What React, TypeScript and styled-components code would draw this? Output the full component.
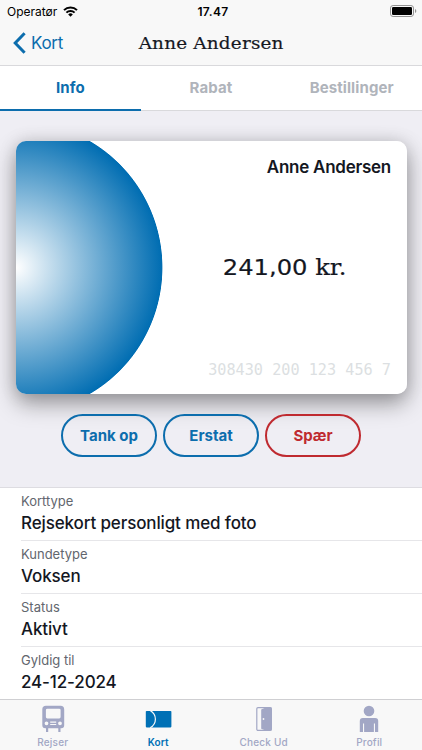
import React from "react";
import styled, { createGlobalStyle } from "styled-components";

const BLUE = "#0c6dad";
const RED = "#bf2a30";
const INK = "#14171f";
const MUTED = "#a2a7c5";

const Global = createGlobalStyle`
  * { box-sizing: border-box; }
  html, body { margin: 0; background: #fff; }
  body { font-family: Inter, "Liberation Sans", sans-serif; color: ${INK}; overflow: hidden; }
  button { font-family: inherit; margin: 0; padding: 0; background: none; border: 0; }
`;

const Screen = styled.div`
  width: 422px;
  height: 750px;
  display: flex;
  flex-direction: column;
  background: #fff;
  overflow: hidden;
`;

const Header = styled.header`
  height: 66px;
  flex: none;
  background: #f8f8f8;
  border-bottom: 1px solid #d9d9dc;
`;

const StatusBar = styled.div`
  height: 22px;
  display: grid;
  grid-template-columns: 1fr auto 1fr;
  align-items: center;
  padding: 0 5px 0 7px;
  color: #000;
`;

const Carrier = styled.div`
  display: flex;
  align-items: center;
  gap: 6px;
  font-size: 12px;
`;

const Clock = styled.div`
  padding-left: 2px;
  font-size: 12px;
  font-weight: 600;
  letter-spacing: 0.4px;
`;

const Battery = styled.svg`
  justify-self: end;
`;

const NavBar = styled.div`
  height: 42px;
  display: grid;
  grid-template-columns: 1fr auto 1fr;
  align-items: center;
`;

const Back = styled.button`
  display: flex;
  align-items: center;
  gap: 5px;
  padding-left: 13px;
  color: ${BLUE};
  font-size: 17px;
  line-height: 22px;
  letter-spacing: -0.3px;
`;

const Title = styled.h1`
  margin: 0;
  font: 400 17px/22px "DejaVu Serif", serif;
  letter-spacing: 0.2px;
  transform: scaleX(1.08);
  -webkit-text-stroke: 0.2px ${INK};
`;

const Tabs = styled.nav`
  height: 45px;
  flex: none;
  display: grid;
  grid-template-columns: repeat(3, 1fr);
  border-bottom: 1px solid #d9d9dc;
`;

const Tab = styled.button<{ $active?: boolean }>`
  height: 45px;
  border-bottom: 2px solid ${(p) => (p.$active ? BLUE : "transparent")};
  color: ${(p) => (p.$active ? BLUE : "#b0b4bb")};
  font-size: 15px;
  font-weight: 700;
  letter-spacing: 0.1px;
`;

const Hero = styled.section`
  height: 377px;
  flex: none;
  padding: 30px 15.5px 0;
  background: #efeef4;
  border-bottom: 1px solid #dddce1;
`;

const Card = styled.div`
  height: 253px;
  border-radius: 10px;
  padding: 15px 15.5px 14px;
  display: flex;
  flex-direction: column;
  justify-content: space-between;
  align-items: flex-end;
  background: radial-gradient(circle at 0 50%, #fff 0, #006db2 146px, #fff 146.8px);
  box-shadow: 0 10px 22px rgba(0, 0, 0, 0.35), 0 0 18px rgba(0, 0, 0, 0.13);
`;

const Owner = styled.div`
  font-size: 17px;
  line-height: 22px;
  font-weight: 600;
  letter-spacing: -0.25px;
`;

const Balance = styled.div`
  margin: -3px 45px 0 0;
  font: 400 22px/28px "DejaVu Sans", sans-serif;
  transform: scaleX(1.1);
  transform-origin: right;
  -webkit-text-stroke: 0.2px ${INK};
`;

const Currency = styled.span`
  font-family: "DejaVu Serif", serif;
`;

const CardNumber = styled.div`
  font: 400 15.2px/20px "DejaVu Sans Mono", monospace;
  color: #dcdfe2;
`;

const Actions = styled.div`
  margin-top: 20px;
  display: flex;
  justify-content: center;
  gap: 6px;
`;

const Pill = styled.button<{ $danger?: boolean }>`
  width: 96px;
  height: 43px;
  border-radius: 22px;
  border: 2px solid ${(p) => (p.$danger ? RED : BLUE)};
  color: ${(p) => (p.$danger ? RED : BLUE)};
  font-size: 15px;
  font-weight: 700;
`;

const Details = styled.dl`
  flex: 1;
  min-height: 0;
  margin: 0;
  padding-left: 21px;
  overflow: hidden;
`;

const Detail = styled.div`
  height: 53px;
  padding-top: 4px;
  border-bottom: 1px solid #e6e6e9;
`;

const Label = styled.dt`
  font-size: 13px;
  line-height: 19px;
  color: #62666e;
`;

const Value = styled.dd`
  margin: 0;
  font-size: 17px;
  line-height: 24px;
  font-weight: 500;
  letter-spacing: -0.13px;
`;

const TabBar = styled.footer`
  height: 51px;
  flex: none;
  display: grid;
  grid-template-columns: repeat(4, 1fr);
  background: #f8f8f8;
  border-top: 1px solid #cfcfd2;
`;

const TabItem = styled.button<{ $active?: boolean }>`
  display: flex;
  flex-direction: column;
  align-items: center;
  padding-top: 5px;
  color: ${(p) => (p.$active ? "#0070b5" : MUTED)};
  font-size: 10px;
  line-height: 14px;
  font-weight: ${(p) => (p.$active ? 600 : 500)};
  letter-spacing: 0.2px;
`;

const Glyph = styled.svg`
  display: block;
  width: 28px;
  height: 28px;
  margin-bottom: 2px;
`;

const WifiIcon = () => (
  <svg width="15" height="11" viewBox="0 0 15 11" fill="none" stroke="#000" strokeWidth="2">
    <path d="M1 4.1a9.2 9.2 0 0 1 13 0" />
    <path d="M3.4 6.6a5.8 5.8 0 0 1 8.2 0" />
    <path d="M7.5 10.7 5.2 8.4a3.3 3.3 0 0 1 4.6 0z" fill="#000" stroke="none" />
  </svg>
);

const BatteryIcon = () => (
  <Battery width="27" height="12" viewBox="0 0 27 12">
    <rect x="0.5" y="0.5" width="23" height="11" rx="2.6" fill="none" stroke="#929292" />
    <rect x="2" y="2" width="20" height="8" rx="1.3" />
    <path d="M25 4v4q1.3-.6 1.3-2T25 4" fill="#929292" />
  </Battery>
);

const ChevronIcon = () => (
  <svg width="13" height="22" viewBox="0 0 13 22" fill="none" stroke={BLUE} strokeWidth="3">
    <path d="M11.6 1.2 2.2 11l9.4 9.8" />
  </svg>
);

const TrainIcon = () => (
  <Glyph viewBox="0 0 28 28" fill="currentColor">
    <path
      fillRule="evenodd"
      d="M7 .8h14.500Q25.200.8 25.200 4.500v15.800Q25.200 23.300 22.200 23.300H6.300q-3 0-3-3V4.500Q3.300.8 7 .8zM8.300 3.700Q6.900 3.700 6.900 5.100v6.900q0 1.400 1.400 1.400h11.900q1.400 0 1.400-1.400V5.100q0-1.400-1.400-1.400zM7.500 16.400a1.900 1.900 0 1 0 0 3.800 1.900 1.900 0 0 0 0-3.800zm13.500 0a1.900 1.900 0 1 0 0 3.800 1.900 1.900 0 0 0 0-3.800zM11.200 16.500v1.200h6v-1.200zm0 2.400v1.200h6v-1.200z"
    />
    <path d="M7 22.500h2.200V27H7zM19.300 22.500h2.200V27h-2.200z" />
  </Glyph>
);

const CardIcon = () => (
  <Glyph viewBox="0 0 28 28" fill="currentColor">
    <rect x="1.800" y="6" width="25.600" height="16.400" rx="0.8" />
    <path d="M6.200 5.600q5.200 3.200 5.200 8.600t-5.200 8.600" fill="none" stroke="#f8f8f8" strokeWidth="1.200" />
  </Glyph>
);

const DoorIcon = () => (
  <Glyph viewBox="0 0 28 28">
    <rect x="6.800" y="2.600" width="14.600" height="22.800" rx="1.200" fill="none" stroke="currentColor" strokeWidth="1.200" />
    <path fill="currentColor" d="M21.500 2.500v23H15.500l-4.300-1.700V4.400l4.300-1.900z" />
    <circle cx="13.500" cy="14" r="0.900" fill="#f8f8f8" />
  </Glyph>
);

const PersonIcon = () => (
  <Glyph viewBox="0 0 28 28" fill="currentColor">
    <circle cx="14" cy="6" r="5.300" />
    <path d="M7.800 13h12.400q3 0 3 3v11h-3.200v-8.500h-1.100V27H9.100v-8.500H8V27H4.800V16q0-3 3-3z" />
  </Glyph>
);

const DETAILS = [
  ["Korttype", "Rejsekort personligt med foto"],
  ["Kundetype", "Voksen"],
  ["Status", "Aktivt"],
  ["Gyldig til", "24-12-2024"],
];

export default function App() {
  return (
    <Screen>
      <Global />
      <Header>
        <StatusBar>
          <Carrier>
            Operatør
            <WifiIcon />
          </Carrier>
          <Clock>17.47</Clock>
          <BatteryIcon />
        </StatusBar>
        <NavBar>
          <Back>
            <ChevronIcon />
            Kort
          </Back>
          <Title>Anne Andersen</Title>
        </NavBar>
      </Header>
      <Tabs>
        <Tab $active>Info</Tab>
        <Tab>Rabat</Tab>
        <Tab>Bestillinger</Tab>
      </Tabs>
      <Hero>
        <Card>
          <Owner>Anne Andersen</Owner>
          <Balance>
            241,00 <Currency>kr.</Currency>
          </Balance>
          <CardNumber>308430 200 123 456 7</CardNumber>
        </Card>
        <Actions>
          <Pill>Tank op</Pill>
          <Pill>Erstat</Pill>
          <Pill $danger>Spær</Pill>
        </Actions>
      </Hero>
      <Details>
        {DETAILS.map(([label, value]) => (
          <Detail key={label}>
            <Label>{label}</Label>
            <Value>{value}</Value>
          </Detail>
        ))}
      </Details>
      <TabBar>
        <TabItem><TrainIcon />Rejser</TabItem>
        <TabItem $active><CardIcon />Kort</TabItem>
        <TabItem><DoorIcon />Check Ud</TabItem>
        <TabItem><PersonIcon />Profil</TabItem>
      </TabBar>
    </Screen>
  );
}
